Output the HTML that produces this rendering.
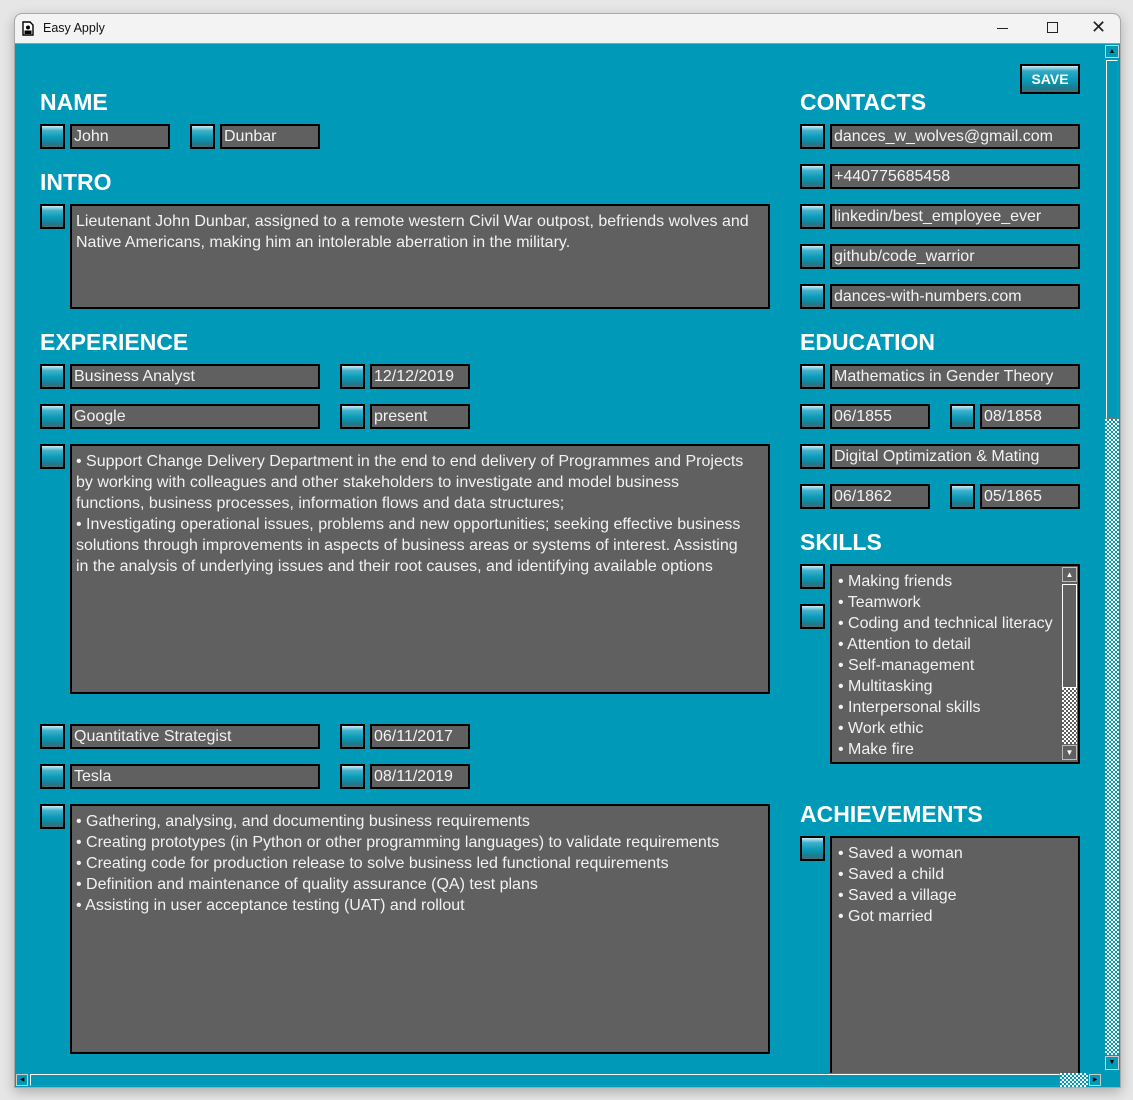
<!DOCTYPE html>
<html><head><meta charset="utf-8"><style>
*{box-sizing:border-box;margin:0;padding:0}
body{width:1133px;height:1100px;background:#e6e6e6;position:relative;overflow:hidden;font-family:"Liberation Sans",sans-serif}
.win{position:absolute;left:14px;top:13px;width:1107px;height:1075px;border:1px solid #a8a8a8;border-radius:8px 8px 0 0;overflow:hidden;box-shadow:0 4px 12px rgba(0,0,0,.25);background:#0099b8}
.title{position:absolute;left:0;top:0;width:100%;height:30px;background:#f3f3f3;border-bottom:1px solid #9a9a9a;font-size:12.5px;color:#111}
.a{position:absolute}
.h{position:absolute;color:#fff;font-weight:bold;font-size:23px;line-height:24px}
.cb{position:absolute;width:25px;height:25px;border:2px solid #000;background:linear-gradient(#cdeef5 0,#3fb2cc 22%,#0a9ab8 55%,#1c7c8e 85%,#4e6a70 100%)}
.f{position:absolute;height:25px;border:2px solid #000;background:#606060;color:#f2f2f2;font-size:16px;line-height:21px;padding-left:2px;white-space:nowrap;overflow:hidden}
.t{position:absolute;border:2px solid #000;background:#606060;color:#f2f2f2;font-size:16px;line-height:21px;padding:5px 4px;white-space:pre;overflow:hidden}
.chk{background-color:#fff;background-image:linear-gradient(45deg,#0099b8 25%,transparent 25%,transparent 75%,#0099b8 75%),linear-gradient(45deg,#0099b8 25%,transparent 25%,transparent 75%,#0099b8 75%);background-size:4px 4px;background-position:0 0,2px 2px}
</style></head><body>
<div class="win">
 <div class="title">
  <svg class="a" style="left:7px;top:7px" width="12" height="15" viewBox="0 0 12 15"><path d="M1 1h7l3 3v10H1z" fill="#fff" stroke="#000" stroke-width="1.4"/><circle cx="6" cy="6.5" r="2" fill="#000"/><rect x="2.5" y="9.5" width="7" height="3.5" fill="#000"/></svg>
  <div class="a" style="left:28px;top:7px">Easy Apply</div>
  <div class="a" style="left:982px;top:14px;width:11px;height:1px;background:#222"></div>
  <div class="a" style="left:1032px;top:8px;width:11px;height:11px;border:1px solid #222"></div>
  <div class="a" style="left:1076px;top:3px;font-size:18px;color:#222">✕</div>
 </div>
 <div class="a" style="left:-15px;top:-14px;width:1133px;height:1100px">
  <div class="h" style="left:40px;top:90px">NAME</div>
  <div class="cb" style="left:40px;top:124px"></div><div class="f" style="left:70px;top:124px;width:100px">John</div>
  <div class="cb" style="left:190px;top:124px"></div><div class="f" style="left:220px;top:124px;width:100px">Dunbar</div>
  <div class="h" style="left:40px;top:170px">INTRO</div>
  <div class="cb" style="left:40px;top:204px"></div>
  <div class="t" style="left:70px;top:204px;width:700px;height:105px">Lieutenant John Dunbar, assigned to a remote western Civil War outpost, befriends wolves and
Native Americans, making him an intolerable aberration in the military.</div>
  <div class="h" style="left:40px;top:330px">EXPERIENCE</div>
  <div class="cb" style="left:40px;top:364px"></div><div class="f" style="left:70px;top:364px;width:250px">Business Analyst</div>
  <div class="cb" style="left:340px;top:364px"></div><div class="f" style="left:370px;top:364px;width:100px">12/12/2019</div>
  <div class="cb" style="left:40px;top:404px"></div><div class="f" style="left:70px;top:404px;width:250px">Google</div>
  <div class="cb" style="left:340px;top:404px"></div><div class="f" style="left:370px;top:404px;width:100px">present</div>
  <div class="cb" style="left:40px;top:444px"></div>
  <div class="t" style="left:70px;top:444px;width:700px;height:250px">• Support Change Delivery Department in the end to end delivery of Programmes and Projects
by working with colleagues and other stakeholders to investigate and model business
functions, business processes, information flows and data structures;
• Investigating operational issues, problems and new opportunities; seeking effective business
solutions through improvements in aspects of business areas or systems of interest. Assisting
in the analysis of underlying issues and their root causes, and identifying available options</div>
  <div class="cb" style="left:40px;top:724px"></div><div class="f" style="left:70px;top:724px;width:250px">Quantitative Strategist</div>
  <div class="cb" style="left:340px;top:724px"></div><div class="f" style="left:370px;top:724px;width:100px">06/11/2017</div>
  <div class="cb" style="left:40px;top:764px"></div><div class="f" style="left:70px;top:764px;width:250px">Tesla</div>
  <div class="cb" style="left:340px;top:764px"></div><div class="f" style="left:370px;top:764px;width:100px">08/11/2019</div>
  <div class="cb" style="left:40px;top:804px"></div>
  <div class="t" style="left:70px;top:804px;width:700px;height:250px">• Gathering, analysing, and documenting business requirements
• Creating prototypes (in Python or other programming languages) to validate requirements
• Creating code for production release to solve business led functional requirements
• Definition and maintenance of quality assurance (QA) test plans
• Assisting in user acceptance testing (UAT) and rollout</div>

  <div class="a" style="left:1020px;top:64px;width:60px;height:30px;border:2px solid #000;background:linear-gradient(#cdeef5 0,#2fa9c4 20%,#0a9ab8 55%,#1c7c8e 85%,#4e6a70 100%);color:#fff;font-weight:bold;font-size:14px;text-align:center;line-height:26px">SAVE</div>
  <div class="h" style="left:800px;top:90px">CONTACTS</div>
  <div class="cb" style="left:800px;top:124px"></div><div class="f" style="left:830px;top:124px;width:250px">dances_w_wolves@gmail.com</div>
  <div class="cb" style="left:800px;top:164px"></div><div class="f" style="left:830px;top:164px;width:250px">+440775685458</div>
  <div class="cb" style="left:800px;top:204px"></div><div class="f" style="left:830px;top:204px;width:250px">linkedin/best_employee_ever</div>
  <div class="cb" style="left:800px;top:244px"></div><div class="f" style="left:830px;top:244px;width:250px">github/code_warrior</div>
  <div class="cb" style="left:800px;top:284px"></div><div class="f" style="left:830px;top:284px;width:250px">dances-with-numbers.com</div>
  <div class="h" style="left:800px;top:330px">EDUCATION</div>
  <div class="cb" style="left:800px;top:364px"></div><div class="f" style="left:830px;top:364px;width:250px">Mathematics in Gender Theory</div>
  <div class="cb" style="left:800px;top:404px"></div><div class="f" style="left:830px;top:404px;width:100px">06/1855</div>
  <div class="cb" style="left:950px;top:404px"></div><div class="f" style="left:980px;top:404px;width:100px">08/1858</div>
  <div class="cb" style="left:800px;top:444px"></div><div class="f" style="left:830px;top:444px;width:250px">Digital Optimization &amp; Mating</div>
  <div class="cb" style="left:800px;top:484px"></div><div class="f" style="left:830px;top:484px;width:100px">06/1862</div>
  <div class="cb" style="left:950px;top:484px"></div><div class="f" style="left:980px;top:484px;width:100px">05/1865</div>
  <div class="h" style="left:800px;top:530px">SKILLS</div>
  <div class="cb" style="left:800px;top:564px"></div>
  <div class="cb" style="left:800px;top:604px"></div>
  <div class="t" style="left:830px;top:564px;width:250px;height:200px;padding:5px 6px">• Making friends
• Teamwork
• Coding and technical literacy
• Attention to detail
• Self-management
• Multitasking
• Interpersonal skills
• Work ethic
• Make fire</div>
  <div class="a" style="left:1061px;top:566px;width:17px;height:196px;background:#606060">
   <div class="a" style="left:1px;top:1px;width:15px;height:15px;border:1px solid #bbb;background:#606060;color:#fff;font-size:8px;text-align:center;line-height:13px">▲</div>
   <div class="a" style="left:1px;top:18px;width:15px;height:104px;border:1px solid #fff"></div>
   <div class="a chk" style="left:1px;top:122px;width:15px;height:56px;background-color:#fff;background-image:linear-gradient(45deg,#606060 25%,transparent 25%,transparent 75%,#606060 75%),linear-gradient(45deg,#606060 25%,transparent 25%,transparent 75%,#606060 75%)"></div>
   <div class="a" style="left:1px;top:179px;width:15px;height:15px;border:1px solid #bbb;color:#fff;font-size:8px;text-align:center;line-height:13px">▼</div>
  </div>
  <div class="h" style="left:800px;top:802px">ACHIEVEMENTS</div>
  <div class="cb" style="left:800px;top:836px"></div>
  <div class="t" style="left:830px;top:836px;width:250px;height:250px;padding:5px 6px">• Saved a woman
• Saved a child
• Saved a village
• Got married</div>

  <div class="a" style="left:1104px;top:44px;width:16px;height:1029px;background:#0099b8">
   <div class="a" style="left:1px;top:1px;width:14px;height:13px;border:1px solid #ccc;color:#000;font-size:7px;text-align:center;line-height:11px">▲</div>
   <div class="a" style="left:2px;top:16px;width:12px;height:359px;border:1px solid #fff;border-right-color:#777;border-bottom-color:#777"></div>
   <div class="a chk" style="left:1px;top:375px;width:14px;height:636px"></div>
   <div class="a" style="left:1px;top:1012px;width:14px;height:14px;border:1px solid #ccc;color:#000;font-size:7px;text-align:center;line-height:12px">▼</div>
  </div>
  <div class="a" style="left:15px;top:1073px;width:1089px;height:14px;background:#0099b8">
   <div class="a" style="left:1px;top:1px;width:12px;height:12px;border:1px solid #ccc;color:#000;font-size:6px;line-height:10px;text-align:center">◀</div>
   <div class="a" style="left:15px;top:1px;width:1030px;height:12px;border:1px solid #fff;border-right-color:#777;border-bottom-color:#777"></div>
   <div class="a chk" style="left:1045px;top:0;width:28px;height:14px"></div>
   <div class="a" style="left:1074px;top:1px;width:12px;height:12px;border:1px solid #ccc;color:#000;font-size:6px;line-height:10px;text-align:center">▶</div>
  </div>
 </div>
</div>
</body></html>
